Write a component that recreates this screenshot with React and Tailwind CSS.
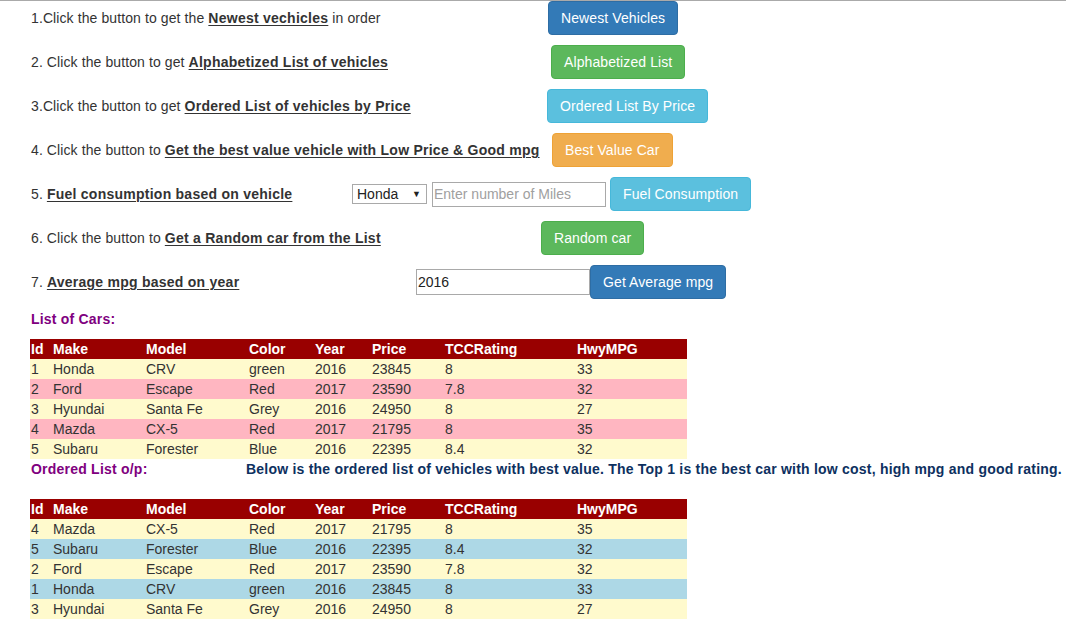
import React from 'react';

const cars = [
  { id: 1, make: 'Honda', model: 'CRV', color: 'green', year: 2016, price: 23845, rating: '8', mpg: 33 },
  { id: 2, make: 'Ford', model: 'Escape', color: 'Red', year: 2017, price: 23590, rating: '7.8', mpg: 32 },
  { id: 3, make: 'Hyundai', model: 'Santa Fe', color: 'Grey', year: 2016, price: 24950, rating: '8', mpg: 27 },
  { id: 4, make: 'Mazda', model: 'CX-5', color: 'Red', year: 2017, price: 21795, rating: '8', mpg: 35 },
  { id: 5, make: 'Subaru', model: 'Forester', color: 'Blue', year: 2016, price: 22395, rating: '8.4', mpg: 32 },
];

const ordered = [4, 5, 2, 1, 3].map((id) => cars.find((c) => c.id === id));

const btnBase = 'h-[34px] px-3 rounded-[4px] border text-white text-[14px] leading-5 whitespace-nowrap tracking-[0.1px]';
const primary = `${btnBase} bg-[#337ab7] border-[#2e6da4]`;
const success = `${btnBase} bg-[#5cb85c] border-[#4cae4c]`;
const info = `${btnBase} bg-[#5bc0de] border-[#46b8da]`;
const warning = `${btnBase} bg-[#f0ad4e] border-[#eea236]`;

const B = ({ children }) => <b className="underline underline-offset-2 tracking-[0.25px]">{children}</b>;

const Row = ({ labelW, label, children }) => (
  <div className="flex items-center h-[34px]">
    <div className={`${labelW} shrink-0 tracking-[0.1px]`}>{label}</div>
    <div className="flex items-center">{children}</div>
  </div>
);

const CarTable = ({ rows, alt }) => (
  <table className="border-collapse text-[14px] leading-5 w-[657px] table-fixed">
    <colgroup>
      <col className="w-[22px]" />
      <col className="w-[93px]" />
      <col className="w-[103px]" />
      <col className="w-[66px]" />
      <col className="w-[57px]" />
      <col className="w-[73px]" />
      <col className="w-[132px]" />
      <col className="w-[111px]" />
    </colgroup>
    <thead>
      <tr className="bg-[#990000] text-white font-bold text-left h-5">
        {['Id', 'Make', 'Model', 'Color', 'Year', 'Price', 'TCCRating', 'HwyMPG'].map((h) => (
          <th key={h} className="pl-px p-0 font-bold">{h}</th>
        ))}
      </tr>
    </thead>
    <tbody className="text-[#333]">
      {rows.map((c, i) => (
        <tr key={c.id} className={`h-5 ${i % 2 === 0 ? 'bg-[#fffacd]' : alt}`}>
          <td className="pl-px">{c.id}</td>
          <td className="pl-px">{c.make}</td>
          <td className="pl-px">{c.model}</td>
          <td className="pl-px">{c.color}</td>
          <td className="pl-px">{c.year}</td>
          <td className="pl-px">{c.price}</td>
          <td className="pl-px">{c.rating}</td>
          <td className="pl-px">{c.mpg}</td>
        </tr>
      ))}
    </tbody>
  </table>
);

export default function App() {
  return (
    <div className="w-[1066px] h-[627px] overflow-hidden bg-white border-t border-[#aaaaaa] text-[#333] text-[14px] leading-5 font-['Liberation_Sans',Arial,sans-serif]">
      <div className="pl-[31px] flex flex-col gap-[10px]">
        <Row labelW="w-[517px]" label={<>1.Click the button to get the <B>Newest vechicles</B> in order</>}>
          <button className={primary}>Newest Vehicles</button>
        </Row>
        <Row labelW="w-[520px]" label={<>2. Click the button to get <B>Alphabetized List of vehicles</B></>}>
          <button className={success}>Alphabetized List</button>
        </Row>
        <Row labelW="w-[516px]" label={<>3.Click the button to get <B>Ordered List of vehicles by Price</B></>}>
          <button className={info}>Ordered List By Price</button>
        </Row>
        <Row labelW="w-[521px]" label={<>4. Click the button to <B>Get the best value vehicle with Low Price &amp; Good mpg</B></>}>
          <button className={warning}>Best Value Car</button>
        </Row>
        <Row labelW="w-[321px]" label={<>5. <B>Fuel consumption based on vehicle</B></>}>
          <div className="w-[75px] h-5 border border-[#a9a9a9] flex items-center justify-between pl-[4px] pr-[5px] text-[#222] bg-white">
            <span>Honda</span>
            <span className="text-[9px] leading-none">▼</span>
          </div>
          <input
            className="ml-[5px] w-[174px] h-[25px] border border-[#a9a9a9] px-[1px] text-[14px] placeholder:text-[#a0a0a0] outline-none"
            placeholder="Enter number of Miles"
          />
          <button className={`${info} ml-1`}>Fuel Consumption</button>
        </Row>
        <Row labelW="w-[510px]" label={<>6. Click the button to <B>Get a Random car from the List</B></>}>
          <button className={success}>Random car</button>
        </Row>
        <Row labelW="w-[385px]" label={<>7. <B>Average mpg based on year</B></>}>
          <input
            className="w-[174px] h-[26px] border border-[#a9a9a9] px-[1px] text-[14px] text-[#222] outline-none"
            defaultValue="2016"
          />
          <button className={primary}>Get Average mpg</button>
        </Row>
      </div>

      <div className="pl-[30px] mt-[10px]">
        <div className="h-5 pl-px font-bold text-[#800080] tracking-[0.2px]">List of Cars:</div>
        <div className="mt-[10px]">
          <CarTable rows={cars} alt="bg-[#ffb6c1]" />
        </div>
        <div className="h-5 flex font-bold tracking-[0.22px]">
          <span className="w-[216px] pl-px text-[#800080] shrink-0">Ordered List o/p:</span>
          <span className="text-[#0d3060] whitespace-nowrap">
            Below is the ordered list of vehicles with best value. The Top 1 is the best car with low cost, high mpg and good rating.
          </span>
        </div>
        <div className="mt-5">
          <CarTable rows={ordered} alt="bg-[#add8e6]" />
        </div>
      </div>
    </div>
  );
}
